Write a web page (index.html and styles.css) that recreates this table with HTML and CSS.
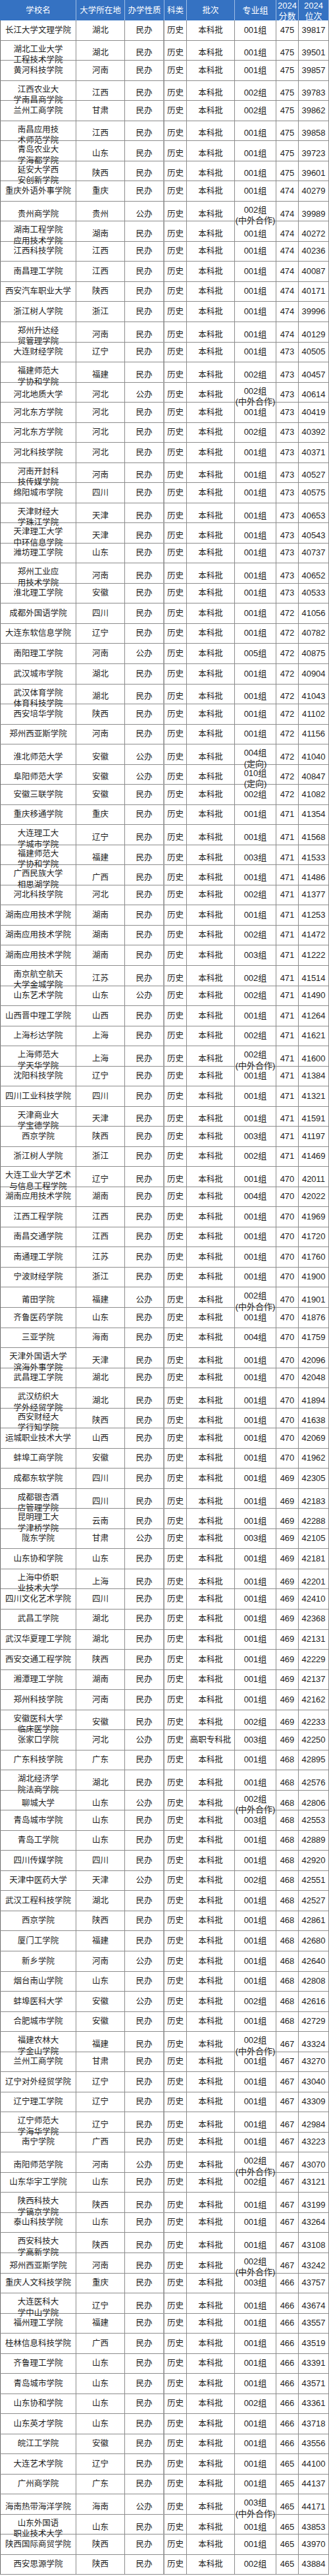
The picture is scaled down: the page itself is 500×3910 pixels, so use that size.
FILE: index.html
```html
<!DOCTYPE html>
<html lang="zh-CN">
<head>
<meta charset="utf-8">
<title>2024 历史类 录取分数</title>
<link rel="stylesheet" href="styles.css">
</head>
<body>
<div class="sheet">
<div class="row head"><div>学校名</div><div>大学所在地</div><div>办学性质</div><div>科类</div><div>批次</div><div>专业组</div><div><span class="two-h">2024<br>分数</span></div><div><span class="two-h">2024<br>位次</span></div></div>
<div class="row"><div>长江大学文理学院</div><div>湖北</div><div>民办</div><div>历史</div><div>本科批</div><div>001组</div><div>475</div><div>39817</div></div>
<div class="row"><div><span class="two">湖北工业大学<br>工程技术学院</span></div><div>湖北</div><div>民办</div><div>历史</div><div>本科批</div><div>001组</div><div>475</div><div>39501</div></div>
<div class="row"><div>黄河科技学院</div><div>河南</div><div>民办</div><div>历史</div><div>本科批</div><div>001组</div><div>475</div><div>39857</div></div>
<div class="row"><div><span class="two">江西农业大<br>学南昌商学院</span></div><div>江西</div><div>民办</div><div>历史</div><div>本科批</div><div>002组</div><div>475</div><div>39783</div></div>
<div class="row"><div>兰州工商学院</div><div>甘肃</div><div>民办</div><div>历史</div><div>本科批</div><div>002组</div><div>475</div><div>39862</div></div>
<div class="row"><div><span class="two">南昌应用技<br>术师范学院</span></div><div>江西</div><div>民办</div><div>历史</div><div>本科批</div><div>001组</div><div>475</div><div>39858</div></div>
<div class="row"><div><span class="two">青岛农业大<br>学海都学院</span></div><div>山东</div><div>民办</div><div>历史</div><div>本科批</div><div>001组</div><div>475</div><div>39723</div></div>
<div class="row"><div><span class="two">延安大学西<br>安创新学院</span></div><div>陕西</div><div>民办</div><div>历史</div><div>本科批</div><div>001组</div><div>475</div><div>39601</div></div>
<div class="row"><div>重庆外语外事学院</div><div>重庆</div><div>民办</div><div>历史</div><div>本科批</div><div>001组</div><div>474</div><div>40279</div></div>
<div class="row"><div>贵州商学院</div><div>贵州</div><div>公办</div><div>历史</div><div>本科批</div><div><span class="two">002组<br>(中外合作)</span></div><div>474</div><div>39989</div></div>
<div class="row"><div><span class="two">湖南工程学院<br>应用技术学院</span></div><div>湖南</div><div>民办</div><div>历史</div><div>本科批</div><div>001组</div><div>474</div><div>40272</div></div>
<div class="row"><div>江西科技学院</div><div>江西</div><div>民办</div><div>历史</div><div>本科批</div><div>001组</div><div>474</div><div>40236</div></div>
<div class="row"><div>南昌理工学院</div><div>江西</div><div>民办</div><div>历史</div><div>本科批</div><div>001组</div><div>474</div><div>40087</div></div>
<div class="row"><div>西安汽车职业大学</div><div>陕西</div><div>民办</div><div>历史</div><div>本科批</div><div>001组</div><div>474</div><div>40171</div></div>
<div class="row"><div>浙江树人学院</div><div>浙江</div><div>民办</div><div>历史</div><div>本科批</div><div>001组</div><div>474</div><div>39996</div></div>
<div class="row"><div><span class="two">郑州升达经<br>贸管理学院</span></div><div>河南</div><div>民办</div><div>历史</div><div>本科批</div><div>001组</div><div>474</div><div>40129</div></div>
<div class="row"><div>大连财经学院</div><div>辽宁</div><div>民办</div><div>历史</div><div>本科批</div><div>001组</div><div>473</div><div>40505</div></div>
<div class="row"><div><span class="two">福建师范大<br>学协和学院</span></div><div>福建</div><div>民办</div><div>历史</div><div>本科批</div><div>002组</div><div>473</div><div>40457</div></div>
<div class="row"><div>河北地质大学</div><div>河北</div><div>公办</div><div>历史</div><div>本科批</div><div><span class="two">002组<br>(中外合作)</span></div><div>473</div><div>40614</div></div>
<div class="row"><div>河北东方学院</div><div>河北</div><div>民办</div><div>历史</div><div>本科批</div><div>001组</div><div>473</div><div>40419</div></div>
<div class="row"><div>河北东方学院</div><div>河北</div><div>民办</div><div>历史</div><div>本科批</div><div>002组</div><div>473</div><div>40392</div></div>
<div class="row"><div>河北科技学院</div><div>河北</div><div>民办</div><div>历史</div><div>本科批</div><div>001组</div><div>473</div><div>40371</div></div>
<div class="row"><div><span class="two">河南开封科<br>技传媒学院</span></div><div>河南</div><div>民办</div><div>历史</div><div>本科批</div><div>001组</div><div>473</div><div>40527</div></div>
<div class="row"><div>绵阳城市学院</div><div>四川</div><div>民办</div><div>历史</div><div>本科批</div><div>001组</div><div>473</div><div>40575</div></div>
<div class="row"><div><span class="two">天津财经大<br>学珠江学院</span></div><div>天津</div><div>民办</div><div>历史</div><div>本科批</div><div>001组</div><div>473</div><div>40653</div></div>
<div class="row"><div><span class="two">天津理工大学<br>中环信息学院</span></div><div>天津</div><div>民办</div><div>历史</div><div>本科批</div><div>001组</div><div>473</div><div>40543</div></div>
<div class="row"><div>潍坊理工学院</div><div>山东</div><div>民办</div><div>历史</div><div>本科批</div><div>001组</div><div>473</div><div>40737</div></div>
<div class="row"><div><span class="two">郑州工业应<br>用技术学院</span></div><div>河南</div><div>民办</div><div>历史</div><div>本科批</div><div>001组</div><div>473</div><div>40652</div></div>
<div class="row"><div>淮北理工学院</div><div>安徽</div><div>民办</div><div>历史</div><div>本科批</div><div>001组</div><div>473</div><div>40533</div></div>
<div class="row"><div>成都外国语学院</div><div>四川</div><div>民办</div><div>历史</div><div>本科批</div><div>001组</div><div>472</div><div>41056</div></div>
<div class="row"><div>大连东软信息学院</div><div>辽宁</div><div>民办</div><div>历史</div><div>本科批</div><div>001组</div><div>472</div><div>40782</div></div>
<div class="row"><div>南阳理工学院</div><div>河南</div><div>公办</div><div>历史</div><div>本科批</div><div>005组</div><div>472</div><div>40875</div></div>
<div class="row"><div>武汉城市学院</div><div>湖北</div><div>民办</div><div>历史</div><div>本科批</div><div>001组</div><div>472</div><div>40904</div></div>
<div class="row"><div><span class="two">武汉体育学院<br>体育科技学院</span></div><div>湖北</div><div>民办</div><div>历史</div><div>本科批</div><div>001组</div><div>472</div><div>41043</div></div>
<div class="row"><div>西安培华学院</div><div>陕西</div><div>民办</div><div>历史</div><div>本科批</div><div>001组</div><div>472</div><div>41102</div></div>
<div class="row"><div>郑州西亚斯学院</div><div>河南</div><div>民办</div><div>历史</div><div>本科批</div><div>001组</div><div>472</div><div>41156</div></div>
<div class="row"><div>淮北师范大学</div><div>安徽</div><div>公办</div><div>历史</div><div>本科批</div><div><span class="two">004组<br>(定向)</span></div><div>472</div><div>41040</div></div>
<div class="row"><div>阜阳师范大学</div><div>安徽</div><div>公办</div><div>历史</div><div>本科批</div><div><span class="two">010组<br>(定向)</span></div><div>472</div><div>40847</div></div>
<div class="row"><div>安徽三联学院</div><div>安徽</div><div>民办</div><div>历史</div><div>本科批</div><div>002组</div><div>472</div><div>41082</div></div>
<div class="row"><div>重庆移通学院</div><div>重庆</div><div>民办</div><div>历史</div><div>本科批</div><div>001组</div><div>471</div><div>41354</div></div>
<div class="row"><div><span class="two">大连理工大<br>学城市学院</span></div><div>辽宁</div><div>民办</div><div>历史</div><div>本科批</div><div>001组</div><div>471</div><div>41568</div></div>
<div class="row"><div><span class="two">福建师范大<br>学协和学院</span></div><div>福建</div><div>民办</div><div>历史</div><div>本科批</div><div>003组</div><div>471</div><div>41533</div></div>
<div class="row"><div><span class="two">广西民族大学<br>相思湖学院</span></div><div>广西</div><div>民办</div><div>历史</div><div>本科批</div><div>001组</div><div>471</div><div>41486</div></div>
<div class="row"><div>河北科技学院</div><div>河北</div><div>民办</div><div>历史</div><div>本科批</div><div>002组</div><div>471</div><div>41377</div></div>
<div class="row"><div>湖南应用技术学院</div><div>湖南</div><div>民办</div><div>历史</div><div>本科批</div><div>001组</div><div>471</div><div>41253</div></div>
<div class="row"><div>湖南应用技术学院</div><div>湖南</div><div>民办</div><div>历史</div><div>本科批</div><div>002组</div><div>471</div><div>41472</div></div>
<div class="row"><div>湖南应用技术学院</div><div>湖南</div><div>民办</div><div>历史</div><div>本科批</div><div>003组</div><div>471</div><div>41222</div></div>
<div class="row"><div><span class="two">南京航空航天<br>大学金城学院</span></div><div>江苏</div><div>民办</div><div>历史</div><div>本科批</div><div>002组</div><div>471</div><div>41514</div></div>
<div class="row"><div>山东艺术学院</div><div>山东</div><div>公办</div><div>历史</div><div>本科批</div><div>002组</div><div>471</div><div>41490</div></div>
<div class="row"><div>山西晋中理工学院</div><div>山西</div><div>民办</div><div>历史</div><div>本科批</div><div>001组</div><div>471</div><div>41264</div></div>
<div class="row"><div>上海杉达学院</div><div>上海</div><div>民办</div><div>历史</div><div>本科批</div><div>002组</div><div>471</div><div>41621</div></div>
<div class="row"><div><span class="two">上海师范大<br>学天华学院</span></div><div>上海</div><div>民办</div><div>历史</div><div>本科批</div><div><span class="two">002组<br>(中外合作)</span></div><div>471</div><div>41600</div></div>
<div class="row"><div>沈阳科技学院</div><div>辽宁</div><div>民办</div><div>历史</div><div>本科批</div><div>001组</div><div>471</div><div>41384</div></div>
<div class="row"><div>四川工业科技学院</div><div>四川</div><div>民办</div><div>历史</div><div>本科批</div><div>001组</div><div>471</div><div>41321</div></div>
<div class="row"><div><span class="two">天津商业大<br>学宝德学院</span></div><div>天津</div><div>民办</div><div>历史</div><div>本科批</div><div>001组</div><div>471</div><div>41591</div></div>
<div class="row"><div>西京学院</div><div>陕西</div><div>民办</div><div>历史</div><div>本科批</div><div>003组</div><div>471</div><div>41197</div></div>
<div class="row"><div>浙江树人学院</div><div>浙江</div><div>民办</div><div>历史</div><div>本科批</div><div>002组</div><div>471</div><div>41469</div></div>
<div class="row"><div><span class="two">大连工业大学艺术<br>与信息工程学院</span></div><div>辽宁</div><div>民办</div><div>历史</div><div>本科批</div><div>001组</div><div>470</div><div>42011</div></div>
<div class="row"><div>湖南应用技术学院</div><div>湖南</div><div>民办</div><div>历史</div><div>本科批</div><div>004组</div><div>470</div><div>42022</div></div>
<div class="row"><div>江西工程学院</div><div>江西</div><div>民办</div><div>历史</div><div>本科批</div><div>001组</div><div>470</div><div>41969</div></div>
<div class="row"><div>南昌交通学院</div><div>江西</div><div>民办</div><div>历史</div><div>本科批</div><div>001组</div><div>470</div><div>41720</div></div>
<div class="row"><div>南通理工学院</div><div>江苏</div><div>民办</div><div>历史</div><div>本科批</div><div>001组</div><div>470</div><div>41760</div></div>
<div class="row"><div>宁波财经学院</div><div>浙江</div><div>民办</div><div>历史</div><div>本科批</div><div>001组</div><div>470</div><div>41900</div></div>
<div class="row"><div>莆田学院</div><div>福建</div><div>公办</div><div>历史</div><div>本科批</div><div><span class="two">002组<br>(中外合作)</span></div><div>470</div><div>41901</div></div>
<div class="row"><div>齐鲁医药学院</div><div>山东</div><div>民办</div><div>历史</div><div>本科批</div><div>001组</div><div>470</div><div>41876</div></div>
<div class="row"><div>三亚学院</div><div>海南</div><div>民办</div><div>历史</div><div>本科批</div><div>004组</div><div>470</div><div>41759</div></div>
<div class="row"><div><span class="two">天津外国语大学<br>滨海外事学院</span></div><div>天津</div><div>民办</div><div>历史</div><div>本科批</div><div>001组</div><div>470</div><div>42096</div></div>
<div class="row"><div>武昌理工学院</div><div>湖北</div><div>民办</div><div>历史</div><div>本科批</div><div>001组</div><div>470</div><div>42048</div></div>
<div class="row"><div><span class="two">武汉纺织大<br>学外经贸学院</span></div><div>湖北</div><div>民办</div><div>历史</div><div>本科批</div><div>001组</div><div>470</div><div>41894</div></div>
<div class="row"><div><span class="two">西安财经大<br>学行知学院</span></div><div>陕西</div><div>民办</div><div>历史</div><div>本科批</div><div>001组</div><div>470</div><div>41638</div></div>
<div class="row"><div>运城职业技术大学</div><div>山西</div><div>民办</div><div>历史</div><div>本科批</div><div>001组</div><div>470</div><div>42069</div></div>
<div class="row"><div>蚌埠工商学院</div><div>安徽</div><div>民办</div><div>历史</div><div>本科批</div><div>001组</div><div>470</div><div>41962</div></div>
<div class="row"><div>成都东软学院</div><div>四川</div><div>民办</div><div>历史</div><div>本科批</div><div>001组</div><div>469</div><div>42305</div></div>
<div class="row"><div><span class="two">成都银杏酒<br>店管理学院</span></div><div>四川</div><div>民办</div><div>历史</div><div>本科批</div><div>001组</div><div>469</div><div>42183</div></div>
<div class="row"><div><span class="two">昆明理工大<br>学津桥学院</span></div><div>云南</div><div>民办</div><div>历史</div><div>本科批</div><div>001组</div><div>469</div><div>42288</div></div>
<div class="row"><div>陇东学院</div><div>甘肃</div><div>公办</div><div>历史</div><div>本科批</div><div>003组</div><div>469</div><div>42105</div></div>
<div class="row"><div>山东协和学院</div><div>山东</div><div>民办</div><div>历史</div><div>本科批</div><div>001组</div><div>469</div><div>42181</div></div>
<div class="row"><div><span class="two">上海中侨职<br>业技术大学</span></div><div>上海</div><div>民办</div><div>历史</div><div>本科批</div><div>001组</div><div>469</div><div>42201</div></div>
<div class="row"><div>四川文化艺术学院</div><div>四川</div><div>民办</div><div>历史</div><div>本科批</div><div>001组</div><div>469</div><div>42410</div></div>
<div class="row"><div>武昌工学院</div><div>湖北</div><div>民办</div><div>历史</div><div>本科批</div><div>001组</div><div>469</div><div>42368</div></div>
<div class="row"><div>武汉华夏理工学院</div><div>湖北</div><div>民办</div><div>历史</div><div>本科批</div><div>001组</div><div>469</div><div>42131</div></div>
<div class="row"><div>西安交通工程学院</div><div>陕西</div><div>民办</div><div>历史</div><div>本科批</div><div>001组</div><div>469</div><div>42229</div></div>
<div class="row"><div>湘潭理工学院</div><div>湖南</div><div>民办</div><div>历史</div><div>本科批</div><div>001组</div><div>469</div><div>42137</div></div>
<div class="row"><div>郑州科技学院</div><div>河南</div><div>民办</div><div>历史</div><div>本科批</div><div>001组</div><div>469</div><div>42162</div></div>
<div class="row"><div><span class="two">安徽医科大学<br>临床医学院</span></div><div>安徽</div><div>民办</div><div>历史</div><div>本科批</div><div>002组</div><div>469</div><div>42233</div></div>
<div class="row"><div>张家口学院</div><div>河北</div><div>公办</div><div>历史</div><div>高职专科批</div><div>003组</div><div>469</div><div>42250</div></div>
<div class="row"><div>广东科技学院</div><div>广东</div><div>民办</div><div>历史</div><div>本科批</div><div>001组</div><div>468</div><div>42895</div></div>
<div class="row"><div><span class="two">湖北经济学<br>院法商学院</span></div><div>湖北</div><div>民办</div><div>历史</div><div>本科批</div><div>001组</div><div>468</div><div>42576</div></div>
<div class="row"><div>聊城大学</div><div>山东</div><div>公办</div><div>历史</div><div>本科批</div><div><span class="two">002组<br>(中外合作)</span></div><div>468</div><div>42806</div></div>
<div class="row"><div>青岛城市学院</div><div>山东</div><div>民办</div><div>历史</div><div>本科批</div><div>003组</div><div>468</div><div>42553</div></div>
<div class="row"><div>青岛工学院</div><div>山东</div><div>民办</div><div>历史</div><div>本科批</div><div>001组</div><div>468</div><div>42889</div></div>
<div class="row"><div>四川传媒学院</div><div>四川</div><div>民办</div><div>历史</div><div>本科批</div><div>001组</div><div>468</div><div>42920</div></div>
<div class="row"><div>天津中医药大学</div><div>天津</div><div>公办</div><div>历史</div><div>本科批</div><div>002组</div><div>468</div><div>42551</div></div>
<div class="row"><div>武汉工程科技学院</div><div>湖北</div><div>民办</div><div>历史</div><div>本科批</div><div>001组</div><div>468</div><div>42527</div></div>
<div class="row"><div>西京学院</div><div>陕西</div><div>民办</div><div>历史</div><div>本科批</div><div>001组</div><div>468</div><div>42861</div></div>
<div class="row"><div>厦门工学院</div><div>福建</div><div>民办</div><div>历史</div><div>本科批</div><div>001组</div><div>468</div><div>42680</div></div>
<div class="row"><div>新乡学院</div><div>河南</div><div>公办</div><div>历史</div><div>本科批</div><div>001组</div><div>468</div><div>42640</div></div>
<div class="row"><div>烟台南山学院</div><div>山东</div><div>民办</div><div>历史</div><div>本科批</div><div>001组</div><div>468</div><div>42808</div></div>
<div class="row"><div>蚌埠医科大学</div><div>安徽</div><div>公办</div><div>历史</div><div>本科批</div><div>002组</div><div>468</div><div>42616</div></div>
<div class="row"><div>合肥城市学院</div><div>安徽</div><div>民办</div><div>历史</div><div>本科批</div><div>001组</div><div>468</div><div>42729</div></div>
<div class="row"><div><span class="two">福建农林大<br>学金山学院</span></div><div>福建</div><div>民办</div><div>历史</div><div>本科批</div><div><span class="two">002组<br>(中外合作)</span></div><div>467</div><div>43324</div></div>
<div class="row"><div>兰州工商学院</div><div>甘肃</div><div>民办</div><div>历史</div><div>本科批</div><div>001组</div><div>467</div><div>43270</div></div>
<div class="row"><div>辽宁对外经贸学院</div><div>辽宁</div><div>民办</div><div>历史</div><div>本科批</div><div>001组</div><div>467</div><div>43040</div></div>
<div class="row"><div>辽宁理工学院</div><div>辽宁</div><div>民办</div><div>历史</div><div>本科批</div><div>001组</div><div>467</div><div>43309</div></div>
<div class="row"><div><span class="two">辽宁师范大<br>学海华学院</span></div><div>辽宁</div><div>民办</div><div>历史</div><div>本科批</div><div>001组</div><div>467</div><div>42984</div></div>
<div class="row"><div>南宁学院</div><div>广西</div><div>民办</div><div>历史</div><div>本科批</div><div>001组</div><div>467</div><div>43223</div></div>
<div class="row"><div>南阳师范学院</div><div>河南</div><div>公办</div><div>历史</div><div>本科批</div><div><span class="two">002组<br>(中外合作)</span></div><div>467</div><div>43070</div></div>
<div class="row"><div>山东华宇工学院</div><div>山东</div><div>民办</div><div>历史</div><div>本科批</div><div>002组</div><div>467</div><div>43121</div></div>
<div class="row"><div><span class="two">陕西科技大<br>学镐京学院</span></div><div>陕西</div><div>民办</div><div>历史</div><div>本科批</div><div>001组</div><div>467</div><div>43199</div></div>
<div class="row"><div>泰山科技学院</div><div>山东</div><div>民办</div><div>历史</div><div>本科批</div><div>001组</div><div>467</div><div>43264</div></div>
<div class="row"><div><span class="two">西安科技大<br>学高新学院</span></div><div>陕西</div><div>民办</div><div>历史</div><div>本科批</div><div>001组</div><div>467</div><div>43108</div></div>
<div class="row"><div>郑州西亚斯学院</div><div>河南</div><div>民办</div><div>历史</div><div>本科批</div><div><span class="two">002组<br>(中外合作)</span></div><div>467</div><div>43242</div></div>
<div class="row"><div>重庆人文科技学院</div><div>重庆</div><div>民办</div><div>历史</div><div>本科批</div><div>003组</div><div>466</div><div>43757</div></div>
<div class="row"><div><span class="two">大连医科大<br>学中山学院</span></div><div>辽宁</div><div>民办</div><div>历史</div><div>本科批</div><div>001组</div><div>466</div><div>43674</div></div>
<div class="row"><div>福州理工学院</div><div>福建</div><div>民办</div><div>历史</div><div>本科批</div><div>001组</div><div>466</div><div>43557</div></div>
<div class="row"><div>桂林信息科技学院</div><div>广西</div><div>民办</div><div>历史</div><div>本科批</div><div>001组</div><div>466</div><div>43519</div></div>
<div class="row"><div>齐鲁理工学院</div><div>山东</div><div>民办</div><div>历史</div><div>本科批</div><div>001组</div><div>466</div><div>43391</div></div>
<div class="row"><div>青岛城市学院</div><div>山东</div><div>民办</div><div>历史</div><div>本科批</div><div>001组</div><div>466</div><div>43571</div></div>
<div class="row"><div>山东协和学院</div><div>山东</div><div>民办</div><div>历史</div><div>本科批</div><div>002组</div><div>466</div><div>43361</div></div>
<div class="row"><div>山东英才学院</div><div>山东</div><div>民办</div><div>历史</div><div>本科批</div><div>001组</div><div>466</div><div>43718</div></div>
<div class="row"><div>皖江工学院</div><div>安徽</div><div>民办</div><div>历史</div><div>本科批</div><div>001组</div><div>466</div><div>43556</div></div>
<div class="row"><div>大连艺术学院</div><div>辽宁</div><div>民办</div><div>历史</div><div>本科批</div><div>001组</div><div>465</div><div>44100</div></div>
<div class="row"><div>广州商学院</div><div>广东</div><div>民办</div><div>历史</div><div>本科批</div><div>001组</div><div>465</div><div>44137</div></div>
<div class="row"><div>海南热带海洋学院</div><div>海南</div><div>公办</div><div>历史</div><div>本科批</div><div><span class="two">003组<br>(中外合作)</span></div><div>465</div><div>44171</div></div>
<div class="row"><div><span class="two">山东外国语<br>职业技术大学</span></div><div>山东</div><div>民办</div><div>历史</div><div>本科批</div><div>001组</div><div>465</div><div>43853</div></div>
<div class="row"><div>陕西国际商贸学院</div><div>陕西</div><div>民办</div><div>历史</div><div>本科批</div><div>001组</div><div>465</div><div>43970</div></div>
<div class="row"><div>西安思源学院</div><div>陕西</div><div>民办</div><div>历史</div><div>本科批</div><div>002组</div><div>465</div><div>43884</div></div>
</div>
</body>
</html>
```
FILE: styles.css
```css
html, body {
  margin: 0;
  padding: 0;
  background: #ffffff;
}

body {
  font-family: "Liberation Sans", "Noto Sans CJK SC", sans-serif;
  font-size: 12.5px;
  color: #1e1e1e;
}

.sheet {
  width: 500px;
}

.row {
  display: grid;
  grid-template-columns: 116px 74px 60px 34px 73px 63px 34px 46px;
  height: 30.54px;
  box-sizing: border-box;
  border-bottom: 1px solid #8c8c8c;
}

.row > div {
  display: flex;
  align-items: center;
  justify-content: center;
  text-align: center;
  white-space: nowrap;
  line-height: 16.5px;
  border-right: 1px solid #8c8c8c;
  min-width: 0;
}

.row > div:first-child {
  border-left: 1px solid #6a6a6a;
}

.row > div:nth-child(3) {
  border-right: 2px solid #a2a2a2;
}

.row > div:nth-child(6),
.row > div:nth-child(7),
.row > div:nth-child(8) {
  font-size: 13px;
}

.two {
  display: block;
  margin-top: 5px;
}

.head {
  height: 31px;
  background: #3572c2;
  color: #ffffff;
  border-bottom: 1px solid #3572c2;
}

.head > div,
.head > div:first-child,
.head > div:nth-child(3) {
  border-left: none;
  border-right: 1px solid #9fbde6;
}

.head > div:first-child {
  border-left: 1px solid #3572c2;
}

.two-h {
  display: block;
  line-height: 16px;
  margin-top: 1px;
}
```
